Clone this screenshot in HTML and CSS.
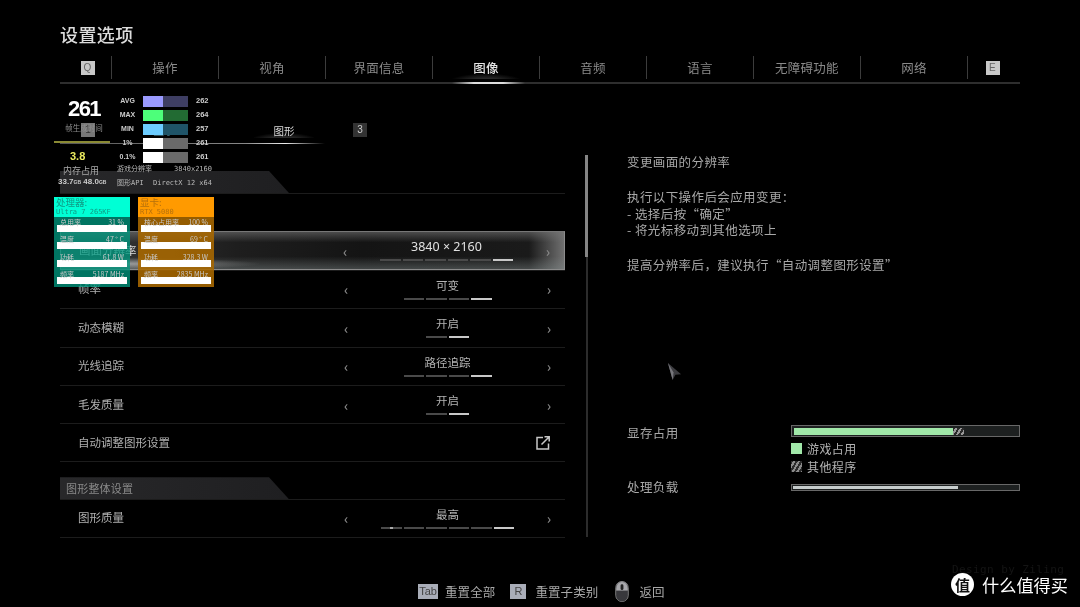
FILE: index.html
```html
<!DOCTYPE html>
<html lang="zh-CN">
  <head>
    <meta charset="UTF-8" />
    <title>设置选项</title>
    <link rel="stylesheet" href="styles.css">
  </head>
  <body>
    <div class="screen">
      <h1 class="title">设置选项</h1>

      <!-- 顶部标签 -->
      <nav class="tabs">
        <div class="tab tab-end"><span class="key key-light">Q</span></div>
        <div class="tab">操作</div>
        <div class="tab">视角</div>
        <div class="tab">界面信息</div>
        <div class="tab tab-on">图像</div>
        <div class="tab">音频</div>
        <div class="tab">语言</div>
        <div class="tab">无障碍功能</div>
        <div class="tab">网络</div>
        <div class="tab tab-end"><span class="key key-light">E</span></div>
      </nav>

      <!-- 子标签 -->
      <div class="subtabs">
        <span class="key key-dim">1</span>
        <span class="subtab subtab-dim">显示</span>
        <span class="subtab subtab-on">图形</span>
        <span class="key key-dark">3</span>
      </div>

      <div class="columns">
        <section class="list">
          <div class="group"></div>
          <div class="row row-blank"></div>
          <div class="row row-on">
            <span class="name">画面分辨率</span>
            <div class="picker">
              <i class="arrow">‹</i>
              <div class="value big">3840 × 2160
                <div class="steps"><b></b><b></b><b></b><b></b><b></b><b class="on"></b></div>
              </div>
              <i class="arrow">›</i>
            </div>
          </div>
          <div class="row">
            <span class="name">帧率</span>
            <div class="picker">
              <i class="arrow">‹</i>
              <div class="value">可变
                <div class="steps"><b></b><b></b><b></b><b class="on"></b></div>
              </div>
              <i class="arrow">›</i>
            </div>
          </div>
          <div class="row">
            <span class="name">动态模糊</span>
            <div class="picker">
              <i class="arrow">‹</i>
              <div class="value">开启
                <div class="steps"><b></b><b class="on"></b></div>
              </div>
              <i class="arrow">›</i>
            </div>
          </div>
          <div class="row">
            <span class="name">光线追踪</span>
            <div class="picker">
              <i class="arrow">‹</i>
              <div class="value">路径追踪
                <div class="steps"><b></b><b></b><b></b><b class="on"></b></div>
              </div>
              <i class="arrow">›</i>
            </div>
          </div>
          <div class="row">
            <span class="name">毛发质量</span>
            <div class="picker">
              <i class="arrow">‹</i>
              <div class="value">开启
                <div class="steps"><b></b><b class="on"></b></div>
              </div>
              <i class="arrow">›</i>
            </div>
          </div>
          <div class="row row-closed">
            <span class="name">自动调整图形设置</span>
            <svg class="open-icon" viewBox="0 0 14 14" width="14" height="14">
              <path d="M7 1.5H1V13H12.5V7.5" fill="none" stroke="#c8c8c8" stroke-width="1.5"/>
              <path d="M5.5 8.5L13 1M8.5 .8H13.2V5.5" fill="none" stroke="#c8c8c8" stroke-width="1.5"/>
            </svg>
          </div>
          <div class="group group-two">图形整体设置</div>
          <div class="row row-closed">
            <span class="name">图形质量</span>
            <div class="picker">
              <i class="arrow">‹</i>
              <div class="value">最高
                <div class="steps"><b class="cut"></b><b></b><b></b><b></b><b></b><b class="on"></b></div>
              </div>
              <i class="arrow">›</i>
            </div>
          </div>
        </section>

        <div class="scroll"><div class="thumb"></div></div>

        <aside class="help">
          <div class="notes">
            <p>变更画面的分辨率</p>
            <p>执行以下操作后会应用变更：<br>- 选择后按“确定”<br>- 将光标移动到其他选项上</p>
            <p>提高分辨率后，建议执行“自动调整图形设置”</p>
          </div>
          <svg class="cursor" viewBox="0 0 16 20" width="15" height="19">
            <path d="M1 1L15 13L9 13.5L6 19Z" fill="#3c3c40"/>
            <path d="M1 1L6 19L7 11Z" fill="#77777c"/>
          </svg>
          <div class="meter">
            <span class="meter-name">显存占用</span>
            <div class="meter-body">
              <div class="bar">
                <div class="bar-green"></div>
                <div class="bar-hatch"></div>
              </div>
              <div class="legend"><i class="swatch swatch-green"></i>游戏占用</div>
              <div class="legend"><i class="swatch swatch-hatch"></i>其他程序</div>
            </div>
          </div>
          <div class="meter meter-load">
            <span class="meter-name">处理负载</span>
            <div class="bar bar-thin"><div class="bar-white"></div></div>
          </div>
        </aside>
      </div>

      <!-- 底部按键提示 -->
      <footer class="hints">
        <span class="key key-foot key-wide">Tab</span><span class="hint">重置全部</span>
        <span class="key key-foot">R</span><span class="hint hint-r">重置子类别</span>
        <svg class="mouse" viewBox="0 0 14 22" width="14" height="21">
          <rect x=".5" y=".5" width="13" height="21" rx="6.5" fill="#55555a" stroke="#8a8a8a"/>
          <path d="M1 10H13V15C13 19 10 21.500 7 21.500S1 19 1 15Z" fill="#38383c"/>
          <path d="M7 1C3 1 1 4 1 10H13C13 4 11 1 7 1Z" fill="#a8a8ac"/>
          <rect x="5.500" y="3.500" width="3" height="6" rx="1.500" fill="#222"/>
        </svg>
        <span class="hint hint-back">返回</span>
      </footer>

      <div class="signature">Design by Ziling</div>
      <div class="brand">
        <span class="brand-logo">值</span>什么值得买
      </div>

      <!-- 帧数监控浮层 -->
      <div class="hud">
        <div class="hud-top">
          <div class="hud-fps">
            <div class="fps">261</div>
            <div class="fps-label">帧生成时间</div>
            <div class="fps-line"></div>
            <div class="frame">3.8</div>
            <div class="mem-label">内存占用</div>
            <div class="mem">33.7<small>GB</small> 48.0<small>GB</small></div>
          </div>
          <div class="hud-side">
            <div class="stat"><span>AVG</span><div class="sbar sbar-avg"><i></i></div><em>262</em></div>
            <div class="stat"><span>MAX</span><div class="sbar sbar-max"><i></i></div><em>264</em></div>
            <div class="stat"><span>MIN</span><div class="sbar sbar-min"><i></i></div><em>257</em></div>
            <div class="stat"><span>1%</span><div class="sbar sbar-low"><i></i></div><em>261</em></div>
            <div class="stat"><span>0.1%</span><div class="sbar sbar-low"><i></i></div><em>261</em></div>
            <div class="info"><span>游戏分辨率</span><span>3840x2160</span></div>
            <div class="info info-api"><span>图形API</span><span>DirectX 12 x64</span></div>
          </div>
        </div>
        <div class="hud-cards">
          <div class="card card-cpu">
            <div class="card-head"><div class="card-kind">处理器:</div>Ultra 7 265KF</div>
            <div class="cell"><span>总用率</span><span>31 %</span></div>
            <div class="cell"><span>温度</span><span>47 ° C</span></div>
            <div class="cell"><span>功耗</span><span>61.8 W</span></div>
            <div class="cell"><span>频率</span><span>5187 MHz</span></div>
          </div>
          <div class="card card-gpu">
            <div class="card-head"><div class="card-kind">显卡:</div>RTX 5080</div>
            <div class="cell"><span>核心占用率</span><span>100 %</span></div>
            <div class="cell"><span>温度</span><span>69 ° C</span></div>
            <div class="cell"><span>功耗</span><span>328.3 W</span></div>
            <div class="cell"><span>频率</span><span>2835 MHz</span></div>
          </div>
        </div>
      </div>
    </div>
  </body>
</html>
```

FILE: styles.css
```css
* {
  box-sizing: border-box;
}
html, body {
  margin: 0;
  background: #000;
}
body {
  font-family: "Noto Sans CJK SC", "Noto Sans", sans-serif;
  color: #c4c4c4;
  overflow: hidden;
}
.screen {
  position: relative;
  width: 1080px;
  height: 607px;
  padding: 22px 60px 0;
  background: #000;
  overflow: hidden;
  filter: blur(0.35px);
}
.title {
  margin: 0;
  font-size: 18px;
  line-height: 25px;
  font-weight: 500;
  letter-spacing: 0.4px;
  color: #dcdcdc;
}
/* Tabs */
.tabs {
  display: flex;
  height: 28px;
  margin-top: 9px;
  padding-bottom: 3px;
  border-bottom: 2px solid #2e2e2e;
}
.tab {
  position: relative;
  flex: 0 0 107px;
  display: flex;
  align-items: center;
  justify-content: center;
  border-left: 1px solid #3c3c3c;
  font-size: 12.500px;
  letter-spacing: 0.25px;
  color: #8a8a8a;
}
.tab-end {
  flex: 0 0 51px;
  padding-left: 4px;
  border-left: 0;
}
.tab-end:last-child {
  border-left: 1px solid #3c3c3c;
  flex-basis: 54px;
  padding-left: 0;
  padding-right: 4px;
}
.tab-on {
  color: #e4e4e4;
  font-weight: 500;
  background: radial-gradient(ellipse 38px 9px at 50% 115%, #4a4a4a, transparent);
}
.tab-on::after {
  content: "";
  position: absolute;
  left: 19px;
  right: 14px;
  bottom: -5px;
  height: 2px;
  background: linear-gradient(90deg, transparent, #ddd 30%, #ddd 70%, transparent);
}
.key {
  display: inline-block;
  width: 14px;
  height: 14px;
  line-height: 14px;
  text-align: center;
  font-family: "Liberation Sans", sans-serif;
  font-size: 10px;
  background: #a8a8a8;
  color: #333;
}
.key-light {
  background: #c8c8c8;
  color: #666;
}
/* Subtabs */
.subtabs {
  position: relative;
  display: flex;
  align-items: center;
  height: 24px;
  margin-top: 34px;
  padding-left: 21px;
  font-size: 10.500px;
}
.subtabs::after {
  content: "";
  position: absolute;
  left: 0;
  width: 265px;
  bottom: -2px;
  height: 1px;
  background: linear-gradient(90deg, #555, #888 70%, #eee 85%, transparent);
}
.subtab {
  width: 60px;
  text-align: center;
}
.subtab-dim {
  margin-left: 39px;
  color: #3f6d7a;
}
.subtab-on {
  margin-left: 60px;
  color: #d8d8d8;
  background: radial-gradient(ellipse 36px 9px at 50% 125%, #505050, transparent);
}
.key-dim {
  background: #777;
  color: #333;
}
.key-dark {
  margin-left: 39px;
  background: #333;
  color: #ccc;
}
/* Columns */
.columns {
  display: flex;
  margin-top: 29px;
}
.list {
  flex: 0 0 505px;
}
.group {
  display: flex;
  align-items: center;
  height: 22px;
  padding-left: 6px;
  font-size: 11px;
  letter-spacing: 0.2px;
  color: #8a8a8a;
  background: linear-gradient(90deg, #28282a, #141416);
  clip-path: polygon(0 0, 209px 0, 229px 100%, 0 100%);
}
.group-two {
  margin-top: 15.400px;
}
.row {
  display: flex;
  align-items: center;
  justify-content: space-between;
  height: 38.400px;
  padding-left: 18px;
  padding-right: 14px;
  border-top: 1px solid #1c1c1c;
  font-size: 11.500px;
  color: #b0b0b0;
}
.row-closed {
  border-bottom: 1px solid #1c1c1c;
}
.row-on {
  border: 1px solid #8c8c8c;
  border-top-color: #777;
  background:
    radial-gradient(ellipse 140px 6px at 60px 86%, rgba(215, 215, 215, 0.6), transparent),
    linear-gradient(180deg, rgba(120, 120, 120, 0.55) 0, transparent 28%, transparent 66%, rgba(130, 140, 140, 0.42) 100%),
    linear-gradient(90deg, #3a3a3a 0, #1e1e1e 35%, #141414 60%, #1a1a1a 93%, #707070 100%);
  color: #ddd;
}
.name {
  margin-top: -2px;
}
.picker {
  display: flex;
  align-items: center;
  justify-content: space-between;
  width: 207px;
}
.arrow {
  font-style: normal;
  font-size: 14px;
  font-weight: 500;
  color: #8a8a8a;
}
.value {
  margin-top: -1px;
  text-align: center;
  line-height: 15px;
  color: #b4b4b4;
}
.value.big {
  font-family: "Noto Sans", sans-serif;
  font-size: 12.500px;
  color: #e0e0e0;
}
.steps {
  display: flex;
  justify-content: center;
  gap: 2px;
  margin-top: 5px;
}
.steps b {
  width: 20.500px;
  height: 2px;
  background: #4a4a4a;
}
.steps b.on {
  background: #c8c8c8;
}
.steps b.cut {
  background: linear-gradient(115deg, #4a4a4a 42%, #aaa 42%, #aaa 58%, #4a4a4a 58%);
}
.open-icon {
  display: block;
  margin-right: 1px;
}
/* Scrollbar */
.scroll {
  position: relative;
  flex: 0 0 2px;
  height: 382px;
  margin-left: 21px;
  margin-top: -16px;
  background: #2c2c2c;
}
.thumb {
  position: absolute;
  left: -1px;
  width: 3px;
  height: 102px;
  background: #858585;
}
/* Right side */
.help {
  position: relative;
  flex: 1;
  margin-left: 39px;
  margin-top: -17px;
  font-size: 12.500px;
  letter-spacing: 0.4px;
  color: #a8a8a8;
}
.notes {
  height: 271px;
}
.notes p {
  margin: 0 0 18.500px;
  line-height: 16.500px;
}
.cursor {
  position: absolute;
  left: 40px;
  top: 208px;
}
.meter {
  display: flex;
  justify-content: space-between;
}
.meter-name {
  line-height: 16px;
}
.meter-body {
  width: 229px;
}
.meter-load {
  margin-top: 4px;
}
.bar {
  display: flex;
  width: 229px;
  height: 12px;
  padding: 1.500px;
  background: #1d2020;
  border: 1px solid #686868;
  margin-bottom: 2px;
}
.bar-thin {
  height: 7px;
  padding: 1px;
  margin-top: 5px;
}
.bar-green {
  width: 159px;
  background: #a1e8a9;
}
.bar-hatch {
  width: 11px;
  background: repeating-linear-gradient(120deg, #2a2a2a 0 2px, #999 2px 4px);
}
.bar-white {
  width: 165px;
  background: #c6cccc;
}
.legend {
  display: flex;
  align-items: center;
  height: 18px;
  gap: 5px;
  font-size: 12px;
  color: #b4b4b4;
}
.swatch {
  width: 11px;
  height: 11px;
}
.swatch-green {
  background: #a1e8a9;
}
.swatch-hatch {
  background: repeating-linear-gradient(120deg, #2a2a2a 0 2px, #8a8a8a 2px 4px);
}
/* Footer */
.hints {
  position: absolute;
  left: 418px;
  top: 581px;
  display: flex;
  align-items: center;
  height: 21px;
  font-size: 12.500px;
  letter-spacing: 0.1px;
  color: #a8a8a8;
}
.key-foot {
  width: 16px;
  height: 15px;
  line-height: 15px;
  background: #a9adb8;
  color: #444;
  font-size: 11px;
  letter-spacing: 0;
}
.key-wide {
  width: 20px;
}
.hint {
  margin-left: 7px;
  margin-right: 15px;
}
.hint-r {
  margin-left: 9px;
  margin-right: 17px;
}
.hint-back {
  margin-left: 10px;
}
.signature {
  position: absolute;
  left: 952px;
  top: 563px;
  font-family: "DejaVu Sans Mono", monospace;
  font-size: 11px;
  line-height: 14px;
  letter-spacing: 0.4px;
  color: #141414;
}
.brand {
  position: absolute;
  left: 951px;
  top: 573px;
  display: flex;
  align-items: center;
  gap: 8px;
  height: 23px;
  font-size: 17.200px;
  color: #fff;
}
.brand-logo {
  display: flex;
  align-items: center;
  justify-content: center;
  width: 23px;
  height: 23px;
  border-radius: 50%;
  background: #fff;
  color: #111;
  font-size: 15px;
  font-weight: 700;
}
/* HUD */
.hud {
  position: absolute;
  left: 54px;
  top: 94px;
  width: 160px;
  color: #eee;
}
.hud-top {
  display: flex;
  height: 103px;
}
.hud-fps {
  flex: 0 0 60px;
  text-align: center;
}
.fps {
  margin-top: 4.500px;
  font: bold 22px/20px "Liberation Sans", sans-serif;
  letter-spacing: -1.500px;
  color: #fff;
}
.fps-label {
  margin-top: 4.500px;
  font-size: 7.500px;
  line-height: 10px;
  color: #8e8e8e;
}
.fps-line {
  width: 56px;
  height: 1.500px;
  margin-top: 8px;
  background: #8a8a34;
}
.frame {
  margin-top: 7px;
  padding-left: 16px;
  text-align: left;
  font: bold 11px/12px "Liberation Sans", sans-serif;
  color: #ecec60;
}
.mem-label {
  margin-top: 3px;
  padding-left: 9px;
  text-align: left;
  font-size: 9px;
  line-height: 12px;
  color: #aaa;
}
.mem {
  padding-left: 4px;
  text-align: left;
  font: bold 8px/10px "Liberation Sans", sans-serif;
  white-space: nowrap;
  color: #ccc;
}
.mem small {
  font-size: 5px;
}
.hud-side {
  flex: 1;
  padding-left: 3px;
}
.stat {
  display: flex;
  align-items: center;
  height: 14px;
  font: bold 7px/12px "Liberation Sans", sans-serif;
}
.stat span {
  width: 26px;
  padding-right: 5px;
  text-align: center;
  color: #ccc;
}
.sbar {
  width: 45px;
  height: 11px;
}
.sbar i {
  display: block;
  width: 20px;
  height: 100%;
}
.stat em {
  margin-left: 8px;
  font-size: 7.500px;
  font-style: normal;
  color: #ccc;
}
.sbar-avg { background: #3e3e63; }
.sbar-avg i { background: #9a9aff; }
.sbar-max { background: #226b33; }
.sbar-max i { background: #4dff7a; }
.sbar-min { background: #1f5468; }
.sbar-min i { background: #6cccff; }
.sbar-low { background: #6a6a6a; }
.sbar-low i { background: #fff; }
.info {
  display: flex;
  justify-content: space-between;
  width: 95px;
  font-family: "DejaVu Sans Mono", "Noto Sans CJK SC", monospace;
  font-size: 7px;
  line-height: 11px;
  color: #b8b8b8;
  white-space: nowrap;
}
.info-api {
  margin-top: 2.500px;
}
.hud-cards {
  display: flex;
  gap: 8px;
}
.card {
  flex: 0 0 76px;
  height: 90px;
  padding: 0 3px;
}
.card-cpu {
  background: rgba(0, 150, 125, 0.78);
}
.card-gpu {
  background: rgba(170, 105, 0, 0.88);
}
.card-head {
  height: 20px;
  margin: 0 -3px;
  padding-left: 2px;
  font-family: "DejaVu Sans Mono", monospace;
  font-size: 7px;
  line-height: 8px;
  white-space: nowrap;
}
.card-kind {
  font-family: "Noto Sans CJK SC", sans-serif;
  font-size: 9.500px;
  line-height: 11px;
}
.card-cpu .card-head {
  background: #00ffd5;
  color: #0f9a84;
}
.card-gpu .card-head {
  background: #ff9a00;
  color: #b4700c;
}
.cell {
  display: flex;
  justify-content: space-between;
  align-items: flex-start;
  height: 17.300px;
  padding: 1px 3px 0;
  font-size: 7px;
  line-height: 9px;
  color: #c8c8c8;
  background: linear-gradient(180deg, transparent 0 8px, #fff 8px 15px, transparent 15px);
  white-space: nowrap;
}
```
